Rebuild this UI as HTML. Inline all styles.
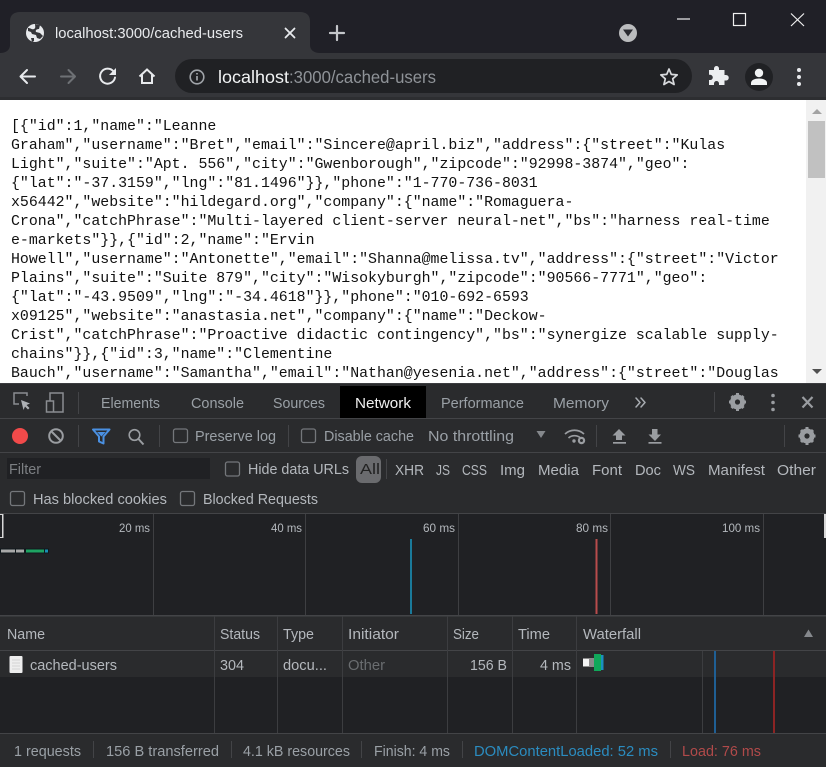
<!DOCTYPE html>
<html><head><meta charset="utf-8"><style>
html,body{margin:0;padding:0;background:#fff;width:826px;height:767px;overflow:hidden}
svg{display:block;position:absolute;left:0;top:0}
text{font-family:"Liberation Sans",sans-serif;font-size:14.5px;white-space:pre}
.m{font-family:"Liberation Mono",monospace;font-size:14.88px;fill:#111}
.t{fill:#9aa0a6}.r{fill:#b4b8bd}.l{fill:#a8acb1}
.s{fill:none;stroke-linecap:round;stroke-linejoin:round}
</style></head><body>
<svg width="826" height="767" viewBox="0 0 826 767" xmlns="http://www.w3.org/2000/svg">
<rect width="826" height="100" fill="#202027"/>
<rect y="53" width="826" height="46" fill="#35363a"/>
<rect y="97" width="826" height="3" fill="#2d2e31"/>
<path d="M0 53C6 53 10 50 10 45V21C10 15 14 12 20 12H300C306 12 310 15 310 21V45C310 50 314 53 320 53Z" fill="#35363a"/>
<circle cx="35" cy="33" r="9" fill="#e8eaed"/>
<path d="M28 28c3 0 4 2 6 1s1-3 1-5l5 1-1 4c-2 0-4 1-3 3l4 1 3 3-3 3-3-1-1-3-4-1-1-2-3-1z" fill="#35363a"/>
<path d="M31 38l3 0 0 3-2 1z" fill="#35363a"/>
<text x="55" y="38" fill="#e8eaed" textLength="188" lengthAdjust="spacingAndGlyphs">localhost:3000/cached-users</text>
<path d="M285.500 28.500l9 9m0-9l-9 9" stroke="#e8eaed" stroke-width="1.800" class="s"/>
<path d="M337 26v14M330 33h14" stroke="#c4c6ca" stroke-width="2.200" class="s"/>
<circle cx="628" cy="33" r="9" fill="#bbbcbe"/><path d="M623 29.500h10l-5 7z" fill="#2a2a30"/>
<path d="M677 19h13" stroke="#f0f0f0" stroke-width="1.200"/>
<rect x="733.500" y="13.500" width="12" height="12" fill="none" stroke="#f0f0f0" stroke-width="1.200"/>
<path d="M791 13.500l13 12.500m0-12.500L791 26" stroke="#f0f0f0" stroke-width="1.200"/>
<path d="M35 76.500H21m6-6.500l-6.500 6.500 6.500 6.500" stroke="#e8eaed" stroke-width="2" class="s"/>
<path d="M75 76.500H61m7.500-6.500l6.500 6.500-6.500 6.500" stroke="#6e7175" stroke-width="2" class="s"/>
<path d="M113.500 71.500a7.500 7.500 0 1 0 1.500 6" stroke="#e8eaed" stroke-width="2" class="s"/>
<path d="M116 68v7h-7z" fill="#e8eaed"/>
<path d="M139.500 76.500L147 69.500l7.500 7M142 75v8h10v-8" stroke="#e8eaed" stroke-width="2" fill="none" stroke-linejoin="miter"/>
<rect x="175" y="59" width="517" height="34" rx="17" fill="#202124"/>
<circle cx="197" cy="77" r="6.800" fill="none" stroke="#a0a4a9" stroke-width="1.600"/>
<path d="M197 76v4.500M197 73v1.500" stroke="#a0a4a9" stroke-width="1.700"/>
<text x="218" y="83" style="font-size:17.5px" fill="#f1f3f4" textLength="71" lengthAdjust="spacingAndGlyphs">localhost</text>
<text x="289" y="83" style="font-size:17.5px" fill="#8f9398" textLength="147" lengthAdjust="spacingAndGlyphs">:3000/cached-users</text>
<path d="M669 69l2.300 5.400 5.900.500-4.500 3.900 1.400 5.700-5.100-3-5.100 3 1.400-5.700-4.500-3.900 5.900-.5z" fill="none" stroke="#d8dadd" stroke-width="1.700" stroke-linejoin="round"/>
<path d="M710 71h5v-1.500a2.500 2.500 0 0 1 5 0V71h5.500v5h1.500a2.700 2.700 0 0 1 0 5.500h-1.500V86H720v-1.500a2.500 2.500 0 0 0-5 0V86h-5v-5h1.200a2.600 2.600 0 0 0 0-5.200H710z" fill="#eceef0" transform="translate(-1 -1)"/>
<circle cx="759" cy="77" r="14" fill="#202124"/>
<circle cx="759" cy="73" r="4.200" fill="#f1f3f4"/><path d="M751 85v-2c0-3 4-4.500 8-4.500s8 1.500 8 4.500v2z" fill="#f1f3f4"/>
<circle cx="799" cy="70" r="2" fill="#e8eaed"/><circle cx="799" cy="77" r="2" fill="#e8eaed"/><circle cx="799" cy="84" r="2" fill="#e8eaed"/>

<rect y="100" width="826" height="284" fill="#fff"/>
<text class="m" x="11" y="130">[{"id":1,"name":"Leanne</text>
<text class="m" x="11" y="149">Graham","username":"Bret","email":"Sincere@april.biz","address":{"street":"Kulas</text>
<text class="m" x="11" y="168">Light","suite":"Apt. 556","city":"Gwenborough","zipcode":"92998-3874","geo":</text>
<text class="m" x="11" y="187">{"lat":"-37.3159","lng":"81.1496"}},"phone":"1-770-736-8031</text>
<text class="m" x="11" y="206">x56442","website":"hildegard.org","company":{"name":"Romaguera-</text>
<text class="m" x="11" y="225">Crona","catchPhrase":"Multi-layered client-server neural-net","bs":"harness real-time</text>
<text class="m" x="11" y="244">e-markets"}},{"id":2,"name":"Ervin</text>
<text class="m" x="11" y="263">Howell","username":"Antonette","email":"Shanna@melissa.tv","address":{"street":"Victor</text>
<text class="m" x="11" y="282">Plains","suite":"Suite 879","city":"Wisokyburgh","zipcode":"90566-7771","geo":</text>
<text class="m" x="11" y="301">{"lat":"-43.9509","lng":"-34.4618"}},"phone":"010-692-6593</text>
<text class="m" x="11" y="320">x09125","website":"anastasia.net","company":{"name":"Deckow-</text>
<text class="m" x="11" y="339">Crist","catchPhrase":"Proactive didactic contingency","bs":"synergize scalable supply-</text>
<text class="m" x="11" y="358">chains"}},{"id":3,"name":"Clementine</text>
<text class="m" x="11" y="377">Bauch","username":"Samantha","email":"Nathan@yesenia.net","address":{"street":"Douglas</text>
<rect x="806" y="100" width="20" height="284" fill="#f1f1f1"/>
<rect x="808" y="121" width="17" height="57" fill="#c1c1c1"/>
<path d="M812 114h10l-5-5z" fill="#a3a3a3"/><path d="M812 369h10l-5 5z" fill="#505050"/>

<rect y="383" width="826" height="384" fill="#2a2b2d"/>
<rect y="383" width="826" height="1" fill="#3c3d40"/>
<rect x="340" y="386" width="86" height="32" fill="#000"/>
<rect y="418" width="826" height="1" fill="#434447"/>
<rect y="452" width="826" height="1" fill="#434447"/>
<rect y="513" width="826" height="1" fill="#434447"/>
<path d="M19 404h-5v-11h13v3" fill="none" stroke="#8a8d91" stroke-width="1.500"/>
<path d="M21 400l9 3.500-3.500 1.500 3 3-1.500 1.500-3-3-1.500 3.500z" fill="#aeb1b5"/>
<rect x="46.500" y="401" width="7" height="11" fill="none" stroke="#8a8d91" stroke-width="1.500"/>
<path d="M50 401v-8h13v19H54" fill="none" stroke="#8a8d91" stroke-width="1.500"/>
<rect x="78" y="392" width="1" height="22" fill="#434447"/>
<text class="t" x="101" y="408" textLength="59" lengthAdjust="spacingAndGlyphs">Elements</text>
<text class="t" x="191" y="408" textLength="53" lengthAdjust="spacingAndGlyphs">Console</text>
<text class="t" x="273" y="408" textLength="52" lengthAdjust="spacingAndGlyphs">Sources</text>
<text x="355" y="408" fill="#f0f0f0" textLength="56" lengthAdjust="spacingAndGlyphs">Network</text>
<text class="t" x="441" y="408" textLength="83" lengthAdjust="spacingAndGlyphs">Performance</text>
<text class="t" x="553" y="408" textLength="56" lengthAdjust="spacingAndGlyphs">Memory</text>
<path d="M636 398l4 4.500-4 4.500M641 398l4 4.500-4 4.500" stroke="#a8acb1" stroke-width="1.500" class="s"/>
<rect x="714" y="392" width="1" height="20" fill="#434447"/>
<circle cx="737.500" cy="402" r="5.500" fill="none" stroke="#9a9da1" stroke-width="4"/>
<path d="M737.500 393v18M729 402h17M731.500 396l12 12M743.500 396l-12 12" stroke="#9a9da1" stroke-width="3"/><circle cx="737.500" cy="402" r="2.600" fill="#2a2b2d"/>
<circle cx="773" cy="395.500" r="1.800" fill="#9a9da1"/><circle cx="773" cy="402.500" r="1.800" fill="#9a9da1"/><circle cx="773" cy="409.500" r="1.800" fill="#9a9da1"/>
<path d="M802.500 397l10 10.500m0-10.500l-10 10.500" stroke="#9a9da1" stroke-width="2.200"/>

<circle cx="20" cy="436" r="8" fill="#f14a4a"/>
<circle cx="56" cy="436" r="6.800" fill="none" stroke="#9a9da1" stroke-width="2"/><path d="M51.500 431.500l9 9" stroke="#9a9da1" stroke-width="2"/>
<rect x="78" y="425" width="1" height="22" fill="#434447"/>
<path d="M93 429.500h16.500l-6 7v7l-4.500-2v-5z" fill="none" stroke="#4a90e2" stroke-width="2" stroke-linejoin="round"/>
<path d="M97 432h8.500l-4 4.500z" fill="#4a90e2"/>
<circle cx="134.500" cy="435" r="5.300" fill="none" stroke="#9a9da1" stroke-width="1.600"/><path d="M138.500 439l5 5.500" stroke="#9a9da1" stroke-width="2"/>
<rect x="159" y="425" width="1" height="22" fill="#434447"/>
<rect x="288" y="425" width="1" height="22" fill="#434447"/>
<g fill="none" stroke="#74777b" stroke-width="1.300">
<rect x="173.500" y="429" width="14" height="13.500" rx="2"/>
<rect x="301.500" y="429" width="14" height="13.500" rx="2"/>
<rect x="225.500" y="462" width="14" height="14" rx="2"/>
<rect x="10.500" y="491.500" width="14" height="14" rx="2"/>
<rect x="180.500" y="491.500" width="14" height="14" rx="2"/>
</g>
<text class="t" x="195" y="441" textLength="81" lengthAdjust="spacingAndGlyphs">Preserve log</text>
<text class="t" x="324" y="441" textLength="90" lengthAdjust="spacingAndGlyphs">Disable cache</text>
<text class="t" x="428" y="441" textLength="86" lengthAdjust="spacingAndGlyphs">No throttling</text>
<path d="M536.500 431h9l-4.500 7z" fill="#85888c"/>
<path d="M565 434a14 14 0 0 1 19 0M568.500 438a9 9 0 0 1 12 0" fill="none" stroke="#9a9da1" stroke-width="1.700"/><circle cx="574" cy="441" r="1.700" fill="#9a9da1"/>
<circle cx="581.500" cy="440.500" r="2.600" fill="none" stroke="#9a9da1" stroke-width="2.200"/>
<rect x="596" y="425" width="1" height="22" fill="#434447"/>
<path d="M619 429l6.500 6.500H622v4.500h-6v-4.500h-3.500z" fill="#9a9da1"/><rect x="613" y="442" width="13" height="1.700" fill="#9a9da1"/>
<path d="M654.500 429h3v5.500h3.500L655 441l-6.500-6.500H652v-5.500z" fill="#9a9da1"/><rect x="648.500" y="442" width="13" height="1.700" fill="#9a9da1"/>
<rect x="784" y="425" width="1" height="22" fill="#434447"/>
<circle cx="807" cy="436" r="5.500" fill="none" stroke="#9a9da1" stroke-width="4"/>
<path d="M807 427v18M798.500 436h17M801 430l12 12M813 430l-12 12" stroke="#9a9da1" stroke-width="3"/><circle cx="807" cy="436" r="2.600" fill="#2a2b2d"/>

<rect x="7" y="458" width="203" height="21" fill="#202124"/>
<text x="9" y="474" fill="#7c7f83" textLength="32" lengthAdjust="spacingAndGlyphs">Filter</text>
<text class="r" x="248" y="474" textLength="101" lengthAdjust="spacingAndGlyphs">Hide data URLs</text>
<rect x="356" y="456" width="25" height="27" rx="6" fill="#6a6b6e"/>
<text x="360" y="474" fill="#222" textLength="20" lengthAdjust="spacingAndGlyphs">All</text>
<rect x="386" y="459" width="1" height="20" fill="#434447"/>
<g class="r">
<text x="395" y="475" textLength="29" lengthAdjust="spacingAndGlyphs">XHR</text>
<text x="436" y="475" textLength="14" lengthAdjust="spacingAndGlyphs">JS</text>
<text x="462" y="475" textLength="25" lengthAdjust="spacingAndGlyphs">CSS</text>
<text x="500" y="475" textLength="25" lengthAdjust="spacingAndGlyphs">Img</text>
<text x="538" y="475" textLength="41" lengthAdjust="spacingAndGlyphs">Media</text>
<text x="592" y="475" textLength="30" lengthAdjust="spacingAndGlyphs">Font</text>
<text x="635" y="475" textLength="26" lengthAdjust="spacingAndGlyphs">Doc</text>
<text x="673" y="475" textLength="22" lengthAdjust="spacingAndGlyphs">WS</text>
<text x="708" y="475" textLength="57" lengthAdjust="spacingAndGlyphs">Manifest</text>
<text x="777" y="475" textLength="39" lengthAdjust="spacingAndGlyphs">Other</text>
<text x="33" y="504" textLength="134" lengthAdjust="spacingAndGlyphs">Has blocked cookies</text>
<text x="203" y="504" textLength="115" lengthAdjust="spacingAndGlyphs">Blocked Requests</text>
</g>

<rect y="514" width="826" height="101" fill="#202124"/>
<g fill="#3e3f42"><rect x="153" y="514" width="1" height="101"/><rect x="305" y="514" width="1" height="101"/><rect x="458" y="514" width="1" height="101"/><rect x="610" y="514" width="1" height="101"/><rect x="763" y="514" width="1" height="101"/></g>
<g fill="#b4b8bd">
<text style="font-size:12px" x="119" y="532" textLength="31" lengthAdjust="spacingAndGlyphs">20 ms</text>
<text style="font-size:12px" x="271" y="532" textLength="31" lengthAdjust="spacingAndGlyphs">40 ms</text>
<text style="font-size:12px" x="423" y="532" textLength="32" lengthAdjust="spacingAndGlyphs">60 ms</text>
<text style="font-size:12px" x="576" y="532" textLength="32" lengthAdjust="spacingAndGlyphs">80 ms</text>
<text style="font-size:12px" x="722" y="532" textLength="38" lengthAdjust="spacingAndGlyphs">100 ms</text>
</g>
<rect x="0" y="514" width="3.500" height="24" fill="#d8d8d8"/><rect x="0" y="515" width="2" height="22" fill="#202124"/>
<rect x="824" y="514" width="2" height="24" fill="#d8d8d8"/>
<rect x="0" y="548.500" width="49" height="5" fill="#10181c"/>
<rect x="1" y="549.500" width="14" height="3" fill="#a8a8a8"/><rect x="16" y="549.500" width="8" height="3" fill="#a8a8a8"/>
<rect x="26" y="549.500" width="18" height="3" fill="#1ea362"/><rect x="45" y="549.500" width="3" height="3" fill="#1a8fb5"/>
<rect x="410" y="539" width="2" height="75" fill="#1a7a9a"/>
<rect x="595.500" y="539" width="2" height="75" fill="#b84c4c"/>

<rect y="615" width="826" height="1.500" fill="#434447"/>
<rect y="650" width="826" height="1" fill="#434447"/>
<rect y="677" width="826" height="56" fill="#202124"/>
<rect y="733" width="826" height="1" fill="#434447"/>
<g fill="#3c3d40"><rect x="214" y="616" width="1" height="117"/><rect x="277" y="616" width="1" height="117"/><rect x="342" y="616" width="1" height="117"/><rect x="447" y="616" width="1" height="117"/><rect x="512" y="616" width="1" height="117"/><rect x="576" y="616" width="1" height="117"/><rect x="702" y="651" width="1" height="82"/></g>
<g class="r">
<text x="7" y="639" textLength="38" lengthAdjust="spacingAndGlyphs">Name</text>
<text x="220" y="639" textLength="40" lengthAdjust="spacingAndGlyphs">Status</text>
<text x="283" y="639" textLength="31" lengthAdjust="spacingAndGlyphs">Type</text>
<text x="348" y="639" textLength="51" lengthAdjust="spacingAndGlyphs">Initiator</text>
<text x="453" y="639" textLength="26" lengthAdjust="spacingAndGlyphs">Size</text>
<text x="518" y="639" textLength="32" lengthAdjust="spacingAndGlyphs">Time</text>
<text x="583" y="639" textLength="58" lengthAdjust="spacingAndGlyphs">Waterfall</text>
<text x="30" y="670" textLength="87" lengthAdjust="spacingAndGlyphs">cached-users</text>
<text x="220" y="670" textLength="24" lengthAdjust="spacingAndGlyphs">304</text>
<text x="283" y="670" textLength="44" lengthAdjust="spacingAndGlyphs">docu...</text>
<text x="470" y="670" textLength="37" lengthAdjust="spacingAndGlyphs">156 B</text>
<text x="540" y="670" textLength="31" lengthAdjust="spacingAndGlyphs">4 ms</text>
</g>
<text x="348" y="670" fill="#6a6d70" textLength="37" lengthAdjust="spacingAndGlyphs">Other</text>
<path d="M804 637l4.500-7.500 4.500 7.500z" fill="#85888c"/>
<rect x="9.500" y="656" width="13" height="17" rx="1" fill="#eeeeee"/><path d="M12 660h8M12 663h8M12 666h8M12 669h8" stroke="#d4d4d4" stroke-width="1"/>
<rect x="583" y="658" width="11" height="9" fill="#8a8a8a"/><rect x="583" y="659" width="6" height="7" fill="#f4f4f4"/>
<rect x="594" y="654" width="7" height="17" fill="#10a85a"/><rect x="601" y="655" width="2.500" height="15" fill="#1a90c0"/>
<rect x="714" y="651" width="2" height="82" fill="#1f5f94"/>
<rect x="773" y="651" width="2" height="82" fill="#8c2424"/>

<g fill="#434447"><rect x="93" y="741" width="1" height="17"/><rect x="231" y="741" width="1" height="17"/><rect x="361" y="741" width="1" height="17"/><rect x="462" y="741" width="1" height="17"/><rect x="670" y="741" width="1" height="17"/></g>
<text class="t" x="14" y="756" textLength="67" lengthAdjust="spacingAndGlyphs">1 requests</text>
<text class="t" x="106" y="756" textLength="113" lengthAdjust="spacingAndGlyphs">156 B transferred</text>
<text class="t" x="243" y="756" textLength="107" lengthAdjust="spacingAndGlyphs">4.1 kB resources</text>
<text class="t" x="374" y="756" textLength="76" lengthAdjust="spacingAndGlyphs">Finish: 4 ms</text>
<text x="474" y="756" fill="#2b8cc0" textLength="184" lengthAdjust="spacingAndGlyphs">DOMContentLoaded: 52 ms</text>
<text x="682" y="756" fill="#b04a4a" textLength="79" lengthAdjust="spacingAndGlyphs">Load: 76 ms</text>
</svg>
</body></html>
